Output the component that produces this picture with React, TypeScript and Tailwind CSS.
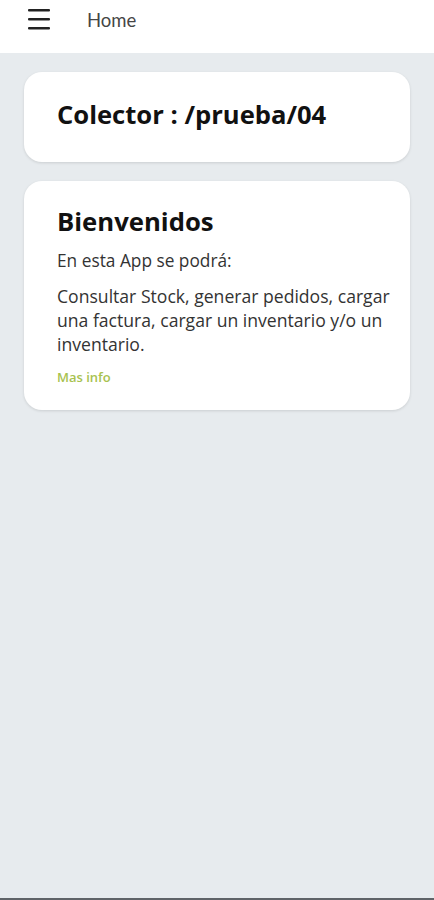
export default function App() {
    return (
        <div className="min-h-[900px] flex flex-col bg-[#e7ebee]" style={{ fontFamily: '"Open Sans", sans-serif' }}>
            {/* TOP BAR */}
            <header className="h-[53px] bg-white flex items-start px-[28px] gap-[37px] pt-[8px]">
                <svg width="22" height="22" viewBox="0 0 22 22" className="text-[#222]">
                    <rect x="0" y="1" width="22" height="2.4" rx="1" fill="currentColor" />
                    <rect x="0" y="10" width="22" height="2.4" rx="1" fill="currentColor" />
                    <rect x="0" y="19" width="22" height="2.4" rx="1" fill="currentColor" />
                </svg>
                <span className="text-[18.5px] text-[#454545] leading-[24px]" style={{ fontFamily: 'Lato, sans-serif' }}>Home</span>
            </header>

            <main className="flex-1 flex flex-col gap-[19px] px-[24px] pt-[19px]">
                {/* COLLECTOR */}
                <section className="bg-white rounded-[18px] shadow-[0_1px_3px_rgba(0,0,0,0.12)] h-[90px] flex items-center pl-[33px] pr-[14px]">
                    <h1 className="text-[25.6px] font-bold text-[#111] -mt-[4px]">Colector : /prueba/04</h1>
                </section>

                {/* WELCOME */}
                <section className="bg-white rounded-[18px] shadow-[0_1px_3px_rgba(0,0,0,0.12)] pl-[33px] pr-[14px] pt-[24px] pb-[25px]">
                    <h2 className="text-[25.7px] font-bold text-[#111] leading-[34px]">Bienvenidos</h2>
                    <p className="text-[17.3px] text-[#333] mt-[10px] leading-[24px]">En esta App se podrá:</p>
                    <p className="text-[17.6px] text-[#333] mt-[11px] leading-[24px]">
                        Consultar Stock, generar pedidos, cargar una factura, cargar un inventario y/o un inventario.
                    </p>
                    <a className="block text-[13px] font-semibold text-[#a8c24f] mt-[13px] leading-[16px]">Mas info</a>
                </section>
            </main>

            <div className="h-[2px] bg-[#5f6368]" />
        </div>
    )
}
